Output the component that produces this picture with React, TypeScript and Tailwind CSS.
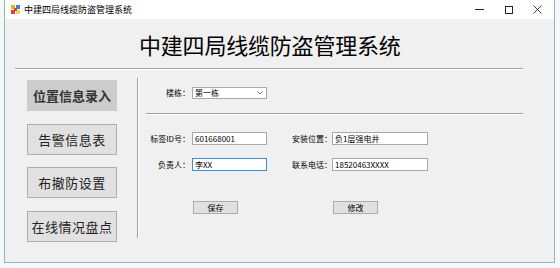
import React from "react";

const cjk = { fontFamily: '"Noto Sans CJK SC", "Noto Sans", sans-serif' };

function AppIcon() {
  return (
    <svg width="9" height="9" viewBox="0 0 9 9">
      <rect x="0" y="0" width="4" height="4" fill="#f2b01e" />
      <rect x="5" y="0" width="4" height="4" fill="#3d7fd6" />
      <rect x="0" y="5" width="4" height="4" fill="#e2402f" />
      <rect x="5" y="5" width="4" height="4" fill="#f6d25a" />
      <rect x="3" y="3" width="3" height="3" fill="#d8452f" />
    </svg>
  );
}

function NavButton({ label, active }: { label: string; active?: boolean }) {
  return (
    <button
      className={
        active
          ? "w-[90px] h-[31px] bg-[#cccccc] text-[#333333] text-[13px] font-bold flex items-center justify-center leading-none"
          : "w-[90px] h-[31px] bg-[#e1e1e1] border border-[#adadad] text-[#222222] text-[13px] tracking-[0.5px] flex items-center justify-center leading-none"
      }
    >
      {label}
    </button>
  );
}

function Field({ value, focused }: { value: string; focused?: boolean }) {
  return (
    <div
      className={
        "h-[13px] bg-white border flex items-center pl-[2px] text-[8px] text-black leading-none " +
        (focused ? "border-[#3c8fd6]" : "border-[#a8a8a8]")
      }
    >
      {value}
    </div>
  );
}

export default function App() {
  return (
    <div className="w-[560px] h-[268px] bg-[#f7f7f7] overflow-hidden" style={cjk}>
      <div className="ml-[4px] w-[551px] h-[263px] border border-[#8fb3c8] border-t-0 bg-[#f0f0f0] flex flex-col">
        {/* title bar */}
        <div className="h-[19px] bg-white flex items-center">
          <div className="ml-[6px] flex items-center">
            <AppIcon />
          </div>
          <span className="ml-[4px] text-[9px] text-black leading-none">中建四局线缆防盗管理系统</span>
          <div className="ml-auto flex items-center h-full">
            <div className="w-[29px] h-full flex items-center justify-center">
              <svg width="9" height="9" viewBox="0 0 9 9">
                <line x1="0" y1="4.5" x2="9" y2="4.5" stroke="#222" strokeWidth="1" />
              </svg>
            </div>
            <div className="w-[29px] h-full flex items-center justify-center">
              <svg width="8" height="8" viewBox="0 0 8 8">
                <rect x="0.5" y="0.5" width="7" height="7" fill="none" stroke="#222" strokeWidth="1" />
              </svg>
            </div>
            <div className="w-[29px] h-full flex items-center justify-center mr-[2px]">
              <svg width="9" height="9" viewBox="0 0 9 9">
                <path d="M0.5 0.5 L8.5 8.5 M8.5 0.5 L0.5 8.5" stroke="#222" strokeWidth="0.9" />
              </svg>
            </div>
          </div>
        </div>

        {/* heading */}
        <div className="h-[49px] flex items-center pl-[134px]">
          <h1 className="text-[22px] text-black leading-none tracking-[-0.2px]">中建四局线缆防盗管理系统</h1>
        </div>
        <div className="ml-[10px] w-[508px] border-t border-[#a0a0a0] border-b border-b-white" />

        {/* main */}
        <div className="flex flex-1">
          <div className="ml-[22px] mt-[10px] flex flex-col gap-[12.5px]">
            <NavButton label="位置信息录入" active />
            <NavButton label="告警信息表" />
            <NavButton label="布撤防设置" />
            <NavButton label="在线情况盘点" />
          </div>

          <div className="ml-[20px] mt-[8px] h-[160px] border-l border-[#a0a0a0] border-r border-r-white" />

          <div className="ml-[7px] flex flex-col w-[377px] text-[8px] text-black">
            <div className="mt-[17px] flex items-center">
              <div className="w-[46px] text-right pr-[2px] leading-none">楼栋：</div>
              <div className="w-[75px] h-[12px] bg-white border border-[#a8a8a8] flex items-center pl-[2px] leading-none">
                <span className="flex-1">第一栋</span>
                <svg width="6" height="4" viewBox="0 0 6 4" className="mr-[3px]">
                  <path d="M0.5 0.5 L3 3 L5.5 0.5" fill="none" stroke="#555" strokeWidth="0.8" />
                </svg>
              </div>
            </div>

            <div className="mt-[14px] w-[377px] border-t border-[#a0a0a0] border-b border-b-white" />

            <div className="mt-[17px] flex items-center">
              <div className="w-[46px] text-right pr-[2px] leading-none whitespace-nowrap">标签ID号：</div>
              <div className="w-[75px]">
                <Field value="601668001" />
              </div>
              <div className="ml-[25px] w-[40px] leading-none whitespace-nowrap">安装位置：</div>
              <div className="w-[96px]">
                <Field value="负1层强电井" />
              </div>
            </div>

            <div className="mt-[13px] flex items-center">
              <div className="w-[46px] text-right pr-[2px] leading-none">负责人：</div>
              <div className="w-[75px]">
                <Field value="李XX" focused />
              </div>
              <div className="ml-[25px] w-[40px] leading-none whitespace-nowrap">联系电话：</div>
              <div className="w-[96px]">
                <Field value="18520463XXXX" />
              </div>
            </div>

            <div className="mt-[30px] flex">
              <button className="ml-[47px] w-[45px] h-[13px] bg-[#e1e1e1] border border-[#adadad] text-[8px] leading-none flex items-center justify-center">
                保存
              </button>
              <button className="ml-[95px] w-[45px] h-[13px] bg-[#e1e1e1] border border-[#adadad] text-[8px] leading-none flex items-center justify-center">
                修改
              </button>
            </div>
          </div>
        </div>
      </div>
    </div>
  );
}
